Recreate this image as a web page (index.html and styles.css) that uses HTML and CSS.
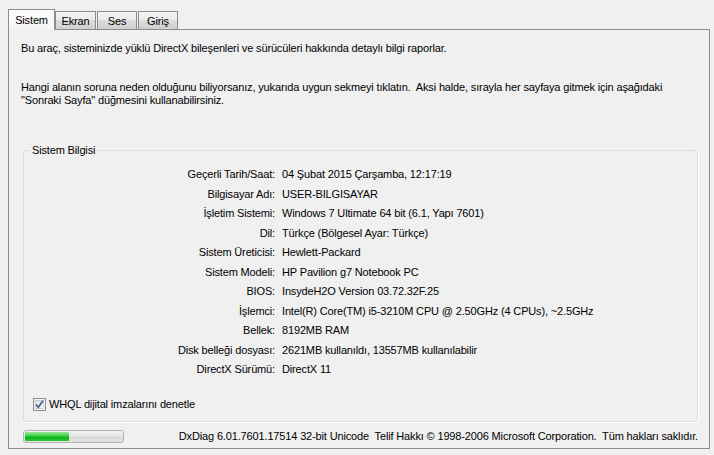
FILE: index.html
```html
<!DOCTYPE html>
<html>
<head>
  <meta charset="utf-8">
  <title>DirectX Tanılama Aracı</title>
  <link rel="stylesheet" href="styles.css">
</head>
<body>
  <div class="dlg">
    <div class="tabs">
      <div class="tab on">Sistem</div>
      <div class="tab ekran">Ekran</div>
      <div class="tab ses">Ses</div>
      <div class="tab giris">Giriş</div>
    </div>
    <div class="panel">
      <p class="intro">Bu araç, sisteminizde yüklü DirectX bileşenleri ve sürücüleri hakkında detaylı bilgi raporlar.</p>
      <p class="intro help">Hangi alanın soruna neden olduğunu biliyorsanız, yukarıda uygun sekmeyi tıklatın.&nbsp; Aksi halde, sırayla her sayfaya gitmek için aşağıdaki<br>"Sonraki Sayfa" düğmesini kullanabilirsiniz.</p>
      <fieldset class="group">
        <legend>Sistem Bilgisi</legend>
        <dl class="info">
          <dt>Geçerli Tarih/Saat:</dt><dd>04 Şubat 2015 Çarşamba, 12:17:19</dd>
          <dt>Bilgisayar Adı:</dt><dd>USER-BILGISAYAR</dd>
          <dt>İşletim Sistemi:</dt><dd>Windows 7 Ultimate 64 bit (6.1, Yapı 7601)</dd>
          <dt>Dil:</dt><dd>Türkçe (Bölgesel Ayar: Türkçe)</dd>
          <dt>Sistem Üreticisi:</dt><dd>Hewlett-Packard</dd>
          <dt>Sistem Modeli:</dt><dd>HP Pavilion g7 Notebook PC</dd>
          <dt>BIOS:</dt><dd>InsydeH2O Version 03.72.32F.25</dd>
          <dt>İşlemci:</dt><dd>Intel(R) Core(TM) i5-3210M CPU @ 2.50GHz (4 CPUs), ~2.5GHz</dd>
          <dt>Bellek:</dt><dd>8192MB RAM</dd>
          <dt>Disk belleği dosyası:</dt><dd>2621MB kullanıldı, 13557MB kullanılabilir</dd>
          <dt>DirectX Sürümü:</dt><dd>DirectX 11</dd>
        </dl>
        <label class="check">
          <span class="box">
            <svg width="13" height="13" viewBox="0 0 13 13">
              <defs>
                <linearGradient id="cb" x1="0" y1="0" x2="1" y2="1">
                  <stop offset="0" stop-color="#dcdcdc"/>
                  <stop offset="1" stop-color="#fbfbfb"/>
                </linearGradient>
              </defs>
              <rect x="0.5" y="0.5" width="12" height="12" fill="#f4f4f4" stroke="#8e8f8f"/>
              <rect x="2.5" y="2.5" width="8" height="8" fill="url(#cb)" stroke="#b8b8b8" stroke-width="0.6"/>
              <path d="M3 6.5 L5.3 9.3 L10 2.8" fill="none" stroke="#4a5f97" stroke-width="1.7"/>
            </svg>
          </span>
          WHQL dijital imzalarını denetle
        </label>
      </fieldset>
      <div class="status">
        <div class="progress"><div class="fill" style="width: 45%"></div></div>
        <span class="copy">DxDiag 6.01.7601.17514 32-bit Unicode&nbsp; Telif Hakkı © 1998-2006 Microsoft Corporation.&nbsp; Tüm hakları saklıdır.</span>
      </div>
    </div>
  </div>
</body>
</html>
```

FILE: styles.css
```css
/* base */
* {
  box-sizing: border-box; }
body {
  margin: 0;
  background: #f0f0f0;
  font-family: 'Liberation Sans', Arial, sans-serif;
  font-size: 11px;
  line-height: 13px;
  letter-spacing: -0.15px;
  color: #000; }

/* dialog frame */
.dlg {
  padding: 9px 4px 0 8px; }

/* tab strip */
.tabs {
  display: flex;
  align-items: flex-end;
  height: 20px; }
.tab {
  height: 18px;
  padding-top: 3px;
  text-align: center;
  border: 1px solid #898c95;
  border-bottom: none;
  background: linear-gradient(#f3f3f3, #ebebeb 45%, #dddddd 50%, #cfcfcf); }
.tab.on {
  position: relative;
  z-index: 1;
  width: 47px;
  height: 21px;
  margin-bottom: -1px;
  padding-top: 4px;
  background: linear-gradient(#fdfdfd, #f4f4f4); }
.ekran { width: 41px; }
.ses { width: 40px; margin-left: 1px; }
.giris { width: 40px; margin-left: 1px; }

/* page */
.panel {
  border: 1px solid #898c95;
  padding: 12px 11px 5px 14px; }
.intro {
  margin: 0 0 0 -2px; }
.help {
  margin-top: 26px; }

/* group box */
.group {
  margin: 37px 0 0;
  padding: 11px 9px 10px;
  border: 1px solid #d5dfe5;
  border-radius: 3px;
  box-shadow: 1px 1px 0 #fff; }
.group legend {
  padding: 0 2px;
  margin-left: -3px; }
.info {
  display: grid;
  grid-template-columns: 242px 1fr;
  column-gap: 7px;
  row-gap: 6.5px;
  margin: 0; }
.info dt {
  text-align: right;
  white-space: nowrap; }
.info dd {
  margin: 0;
  white-space: nowrap; }
.check {
  display: flex;
  align-items: center;
  gap: 3px;
  margin-top: 22px;
  height: 13px; }
.box {
  display: flex; }

/* bottom line */
.status {
  display: flex;
  justify-content: space-between;
  align-items: center;
  margin-top: 8px;
  height: 13px; }
.progress {
  width: 101px;
  height: 13px;
  border: 1px solid #b2b2b2;
  border-radius: 3px;
  padding: 1px;
  background: linear-gradient(#f3f3f3, #e2e2e2 50%, #d6d6d6 55%, #e6e6e6); }
.fill {
  height: 100%;
  border-radius: 1px;
  background: linear-gradient(#9be59b, #3ad03a 45%, #06b025 55%, #2ec42e); }
.copy {
  white-space: nowrap; }
```
